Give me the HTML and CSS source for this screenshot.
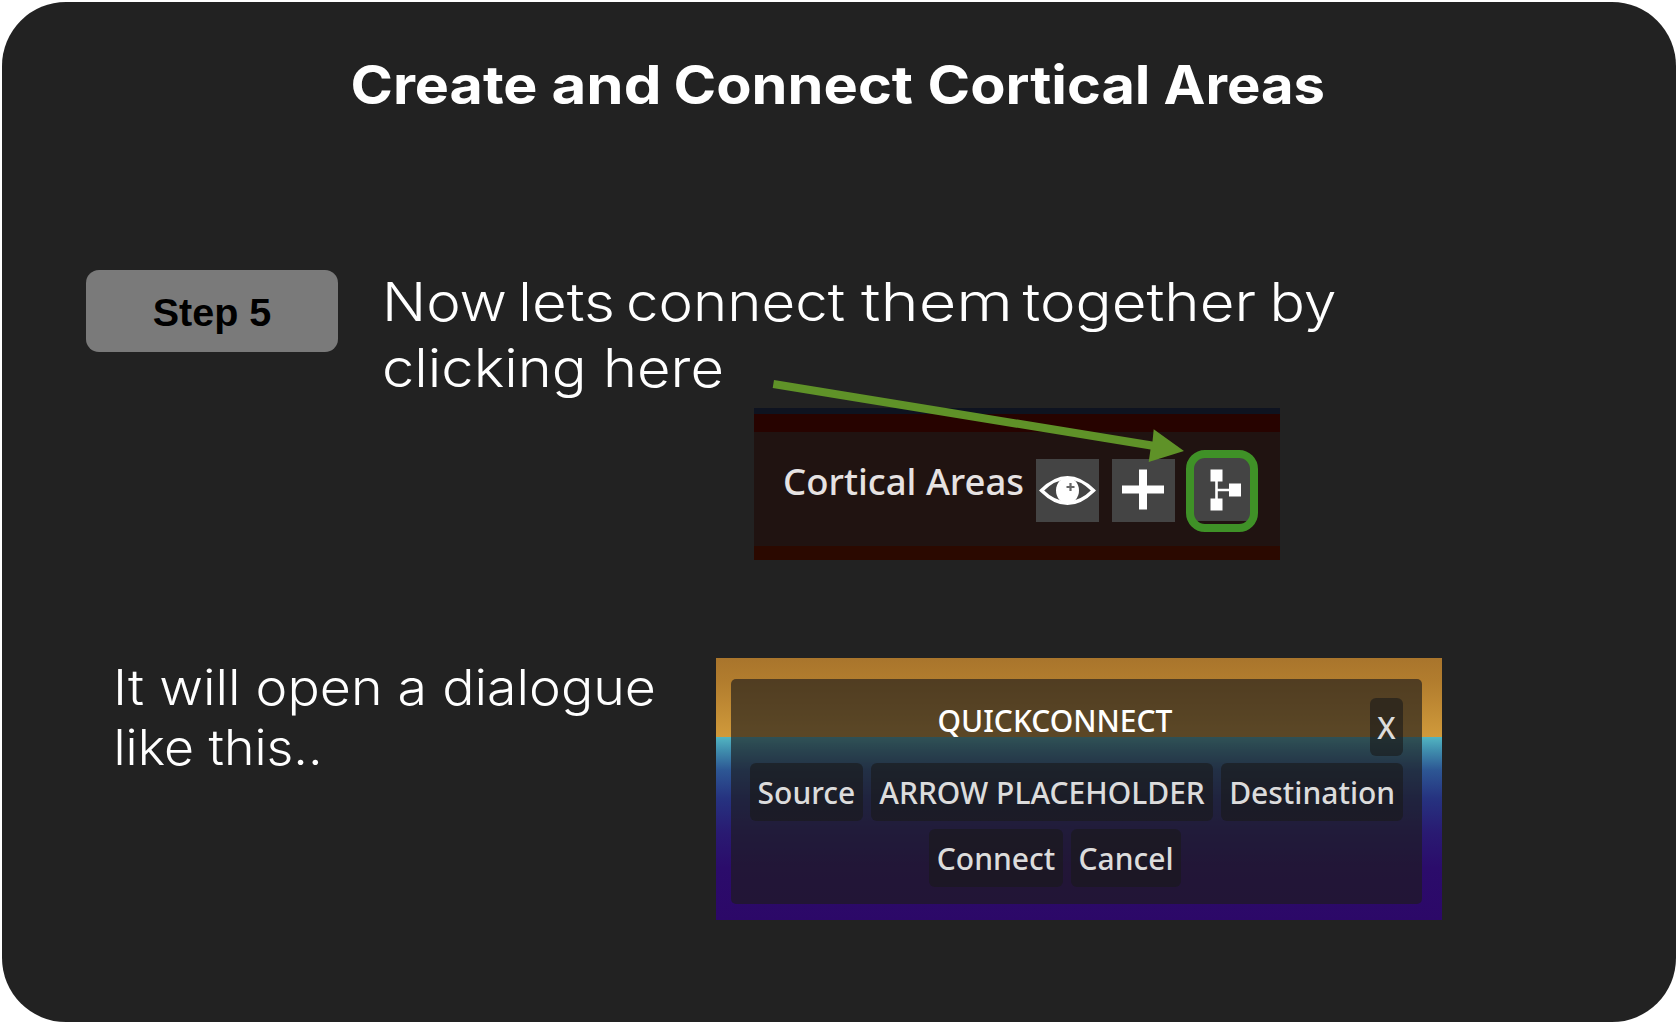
FILE: index.html
```html
<!DOCTYPE html>
<html lang="en">
<head>
<meta charset="utf-8">
<title>Create and Connect Cortical Areas</title>
<link rel="stylesheet" href="styles.css">
</head>
<body>
<main class="slide">
  <svg class="title" width="1678" height="80" role="heading" aria-level="1">
    <text y="55.5"><tspan x="350.5" textLength="187" lengthAdjust="spacingAndGlyphs">Create</tspan> <tspan x="551.5" textLength="110" lengthAdjust="spacingAndGlyphs">and</tspan> <tspan x="673.5" textLength="239.5" lengthAdjust="spacingAndGlyphs">Connect</tspan> <tspan x="927.5" textLength="223" lengthAdjust="spacingAndGlyphs">Cortical</tspan> <tspan x="1163.5" textLength="161.5" lengthAdjust="spacingAndGlyphs">Areas</tspan></text>
  </svg>

  <section class="step">
    <div class="badge">Step 5</div>
    <svg class="copy copy-large" width="980" height="140">
      <text y="51"><tspan x="0" textLength="125" lengthAdjust="spacingAndGlyphs">Now</tspan> <tspan x="136" textLength="97" lengthAdjust="spacingAndGlyphs">lets</tspan> <tspan x="244" textLength="219" lengthAdjust="spacingAndGlyphs">connect</tspan> <tspan x="479" textLength="152" lengthAdjust="spacingAndGlyphs">them</tspan> <tspan x="640.5" textLength="233.5" lengthAdjust="spacingAndGlyphs">together</tspan> <tspan x="887.5" textLength="67" lengthAdjust="spacingAndGlyphs">by</tspan></text>
      <text x="0" y="117" textLength="342" lengthAdjust="spacingAndGlyphs">clicking here</text>
    </svg>
  </section>

  <section class="toolbar">
    <div class="toolbar-body">
      <span class="toolbar-label">Cortical Areas</span>
      <div class="tool">
        <svg width="63" height="63" viewBox="0 0 63 63">
          <path d="M5.500 31.500Q31.500 6 57.500 31.500Q31.500 57 5.500 31.500Z" fill="none" stroke="#fff" stroke-width="3.500"/>
          <ellipse cx="31.500" cy="31.500" rx="11.500" ry="13" fill="#fff"/>
          <path d="M34.500 24v8M30.500 28h8" stroke="#666" stroke-width="2.200"/>
        </svg>
      </div>
      <div class="tool">
        <svg width="63" height="63" viewBox="0 0 63 63"><path d="M31 10.500v40M10 30.500h42" stroke="#fff" stroke-width="8"/></svg>
      </div>
      <div class="tool tool-active">
        <svg width="56" height="63" viewBox="0 0 56 63">
          <path d="M16.500 11.500h12v12h-12zM16.500 40.500h12v12h-12zM35 25.500h12v13H35z" fill="#fff"/>
          <path d="M22.500 22v20M22.500 32H36" stroke="#fff" stroke-width="2.600"/>
        </svg>
      </div>
    </div>
  </section>

  <section class="result">
    <svg class="copy copy-small" width="570" height="140">
      <text x="1" y="47" textLength="543" lengthAdjust="spacingAndGlyphs">It will open a dialogue</text>
      <text x="1.5" y="107" textLength="209" lengthAdjust="spacingAndGlyphs">like this..</text>
    </svg>
    <div class="scene">
      <div class="dialog">
        <header class="dialog-head">
          <span class="dialog-title">QUICKCONNECT</span>
          <span class="btn btn-close">X</span>
        </header>
        <div class="row">
          <span class="btn btn-source">Source</span>
          <span class="btn btn-arrow">ARROW PLACEHOLDER</span>
          <span class="btn btn-dest">Destination</span>
        </div>
        <div class="row row-actions">
          <span class="btn btn-connect">Connect</span>
          <span class="btn btn-cancel">Cancel</span>
        </div>
      </div>
    </div>
  </section>

  <svg class="pointer" width="420" height="90" viewBox="770 377 420 90">
    <path d="M774 380L1152.500 441.500L1153.700 429.300L1184 451L1148.700 462L1150.500 449.500L772.700 388Z" fill="#5f9228"/>
  </svg>
</main>
</body>
</html>
```

FILE: styles.css
```css
* { box-sizing: border-box; }

body { margin: 0; padding: 2px; background: #fff; }

.slide {
  position: relative;
  width: 1674px;
  height: 1020px;
  padding-top: 46px;
  background: #222;
  border-radius: 64px;
}

svg { display: block; overflow: visible; }

.title {
  margin-left: -2px;
  fill: #fff;
  font: 700 53px Inter, sans-serif;
}

.step {
  display: flex;
  gap: 44px;
  height: 140px;
  margin: 142px 0 0 84px;
}

.badge {
  width: 252px;
  height: 82px;
  border-radius: 13px;
  background: #7a7a7a;
  color: #000;
  font: 700 39.500px/85px "Liberation Sans", Arial, sans-serif;
  text-align: center;
}

.copy { fill: #fff; font-family: Inter, sans-serif; font-weight: 300; }
.copy-large { font-size: 53px; }
.copy-small { font-size: 49px; }

.toolbar {
  width: 526px;
  height: 152px;
  margin: -2px 0 0 752px;
  padding-top: 24px;
  background: linear-gradient(#0e1320 6px, #270300 6px, #270300 130px, #2b0900 138px);
}

.toolbar-body {
  display: flex;
  height: 114px;
  padding: 18px 0 0 30px;
  background: #201311;
}

.toolbar-label {
  width: 253px;
  margin: 11px 0 0 -1px;
  color: #e6e2e2;
  font: 500 36.500px/40px "Noto Sans", sans-serif;
  white-space: nowrap;
}

.tool { width: 63px; height: 63px; margin: 9px 13px 0 0; background: #444; }

.tool-active {
  width: 72px;
  height: 82px;
  margin: 0 0 0 -2px;
  border: 8px solid #3f9127;
  border-radius: 19px;
  background: linear-gradient(#444 63px, #201311 63px);
}

.result {
  display: flex;
  height: 262px;
  margin: 98px 0 0 110px;
}

.copy-small { margin-right: 34px; }

.scene {
  width: 726px;
  height: 262px;
  padding: 21px 20px 16px 15px;
  background: linear-gradient(#a9752c 0, #b27d2e 24px, #d09a3b 79px, #52b5c2 79px, #408fae 92px, #2d5794 112px, #263380 140px, #291a72 175px, #2b0c6b 210px, #2c0868 262px);
}

.dialog {
  height: 225px;
  padding: 19px;
  border-radius: 5px;
  background: rgba(29, 27, 28, 0.65);
  color: #fff;
  font: 500 30px/60px "Noto Sans", sans-serif;
}

.dialog-head { display: flex; height: 65px; }
.dialog-title { flex: 1; margin-right: 10px; text-align: center; line-height: 45px; }

.row { display: flex; gap: 8px; height: 58px; }
.row-actions { justify-content: center; gap: 8px; margin: 8px 43px 0 0; }

.btn {
  height: 58px;
  border-radius: 6px;
  background: rgba(25, 25, 25, 0.6);
  color: #dcdcdc;
  text-align: center;
  white-space: nowrap;
}

.btn-close { width: 33px; }
.btn-source { width: 113px; }
.btn-arrow { width: 343px; }
.btn-dest { width: 182px; }
.btn-connect { width: 134px; }
.btn-cancel { width: 110px; }

.pointer { position: absolute; left: 768px; top: 375px; }
```
